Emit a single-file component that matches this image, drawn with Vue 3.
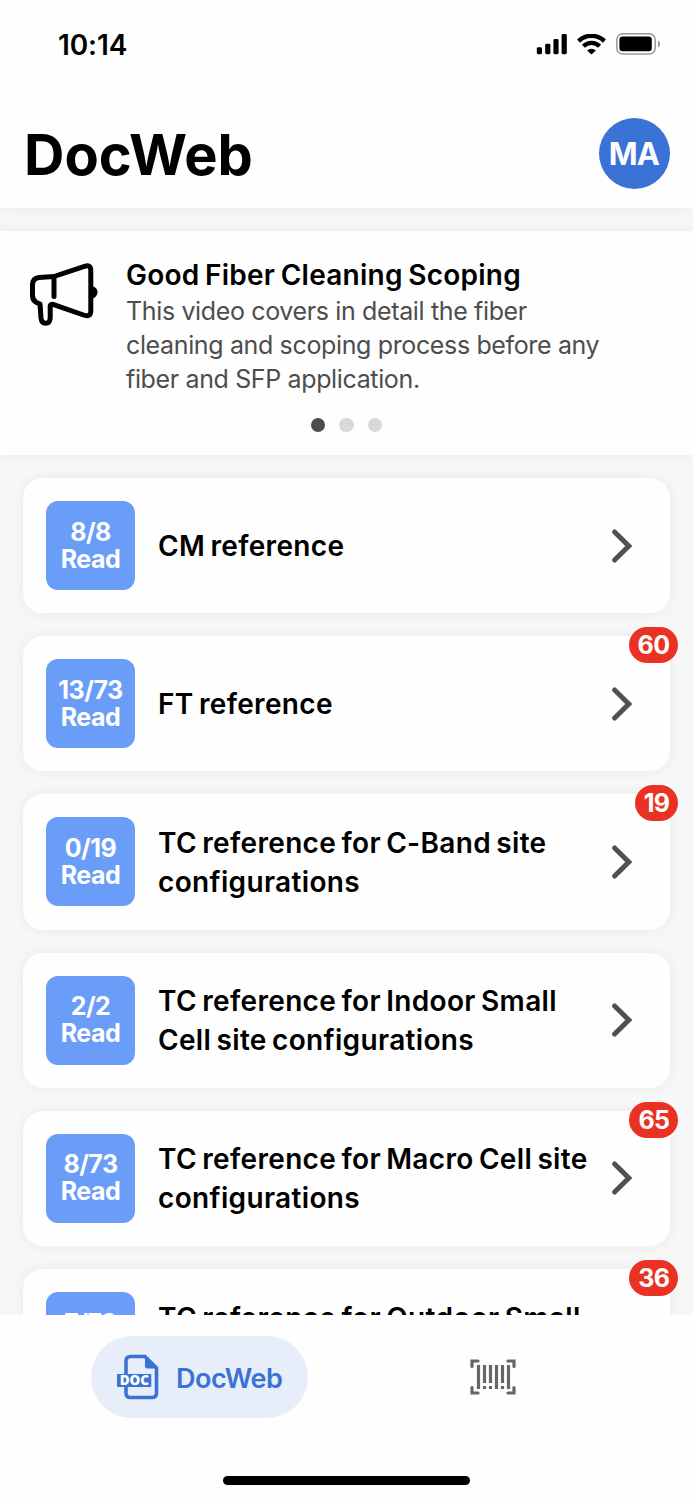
<template>
  <div class="app">
    <header class="header">
      <div class="status-bar">
        <span class="time">10:14</span>
        <div class="status-icons">
          <svg width="31" height="21" viewBox="0 0 31 21">
            <rect x="0.8" y="13.2" width="5.2" height="7" rx="1.4" />
            <rect x="9.2" y="9.8" width="5.2" height="10.4" rx="1.4" />
            <rect x="17.4" y="5" width="5.2" height="15.2" rx="1.4" />
            <rect x="25.6" y="0" width="5.2" height="20.2" rx="1.4" />
          </svg>
          <svg width="29" height="21" viewBox="0 0 29 21">
            <path d="M1.6 7.1A18.4 18.4 0 0 1 27.4 7.1" fill="none" stroke="#000" stroke-width="4.4" />
            <path d="M6.4 12.2A11.6 11.6 0 0 1 22.6 12.2" fill="none" stroke="#000" stroke-width="4.2" />
            <path d="M14.5 20.6L10.1 16.6A6.4 6.4 0 0 1 18.9 16.6Z" />
          </svg>
          <svg width="45" height="22" viewBox="0 0 45 22">
            <rect x="0.8" y="0.8" width="38.4" height="20.2" rx="6" fill="none" stroke="#999" stroke-width="1.5" />
            <rect x="3.4" y="3.6" width="32.4" height="14.6" rx="3.2" />
            <path d="M42 7.6C44.8 8.8 44.8 13.2 42 14.4Z" fill="#999" />
          </svg>
        </div>
      </div>
      <div class="title-row">
        <h1 class="title">DocWeb</h1>
        <div class="avatar">MA</div>
      </div>
    </header>

    <section class="banner">
      <div class="banner-body">
        <svg class="megaphone" width="70" height="64" viewBox="0 0 70 64">
          <g fill="none" stroke="#000" stroke-width="5" stroke-linecap="round" stroke-linejoin="round">
            <path d="M25 13.5L10 14.4Q3.5 15 3.5 22V32.5Q3.5 37.5 7.5 39.5L11 41L12 55Q12.6 60.3 16.5 60.3Q21 60.3 21.2 55V43Q21.2 41 24 41.4L54.5 52Q61.8 54.5 61.8 48V7.5Q61.8 1.3 55.5 3.3L25 13.5V33.5" />
          </g>
          <path d="M63 23Q68.5 24.5 68.5 29.3Q68.5 34 63 35.8Z" />
        </svg>
        <div class="banner-content">
          <h2 class="banner-title">Good Fiber Cleaning Scoping</h2>
          <p class="banner-text">
            <span v-for="line in bannerLines" :key="line">{{ line }}</span>
          </p>
        </div>
      </div>
      <div class="dots">
        <i v-for="n in 3" :key="n" class="dot" :class="{ active: n === 1 }"></i>
      </div>
    </section>

    <main class="list">
      <article v-for="item in items" :key="item.read" class="card">
        <div class="progress">
          <span>{{ item.read }}</span>
          <span>Read</span>
        </div>
        <div class="name">
          <span v-for="line in item.lines" :key="line">{{ line }}</span>
        </div>
        <svg class="chevron" width="22" height="36" viewBox="0 0 22 36">
          <path d="M3.6 4L17.8 18L3.6 32" fill="none" stroke="#505050" stroke-width="5" stroke-linecap="round" />
        </svg>
        <span v-if="item.unread" class="badge">{{ item.unread }}</span>
      </article>
    </main>

    <nav class="tab-bar">
      <div class="tabs">
        <button class="tab active">
          <svg width="42" height="46" viewBox="0 0 42 46">
            <path d="M9 20V7Q9 2.5 13.5 2.5H28L39.5 14V39Q39.5 43.5 35 43.5H13.5Q9 43.5 9 39V32" fill="none" stroke="#3b72d6" stroke-width="3.6" />
            <path d="M28 1.5L41 14.5H30Q28 14.5 28 12.5Z" fill="#3b72d6" />
            <rect x="0" y="20" width="34.3" height="13" rx="1" fill="#3b72d6" />
            <text x="17.4" y="31.3" class="doc-label">DOC</text>
          </svg>
          <span>DocWeb</span>
        </button>
        <button class="tab scan">
          <svg width="46" height="36" viewBox="0 0 46 36">
            <g fill="none" stroke="#666" stroke-width="3.2">
              <path d="M2 7.5V2H8M38 2H44V7.5M2 28.5V34H8M38 34H44V28.5" stroke-linecap="round" />
              <path d="M8.5 6V30M26.5 6V30M38.5 6V30M14.5 6V24M20.5 6V24M32.5 6V24M14.5 27V30M20.5 27V30M32.5 27V30" />
            </g>
          </svg>
        </button>
      </div>
      <div class="home-indicator"></div>
    </nav>
  </div>
</template>

<script setup>
const bannerLines = [
  'This video covers in detail the fiber',
  'cleaning and scoping process before any',
  'fiber and SFP application.'
]

const items = [
  { read: '8/8', lines: ['CM reference'] },
  { read: '13/73', lines: ['FT reference'], unread: 60 },
  { read: '0/19', lines: ['TC reference for C-Band site', 'configurations'], unread: 19 },
  { read: '2/2', lines: ['TC reference for Indoor Small', 'Cell site configurations'] },
  { read: '8/73', lines: ['TC reference for Macro Cell site', 'configurations'], unread: 65 },
  { read: '7/73', lines: ['TC reference for Outdoor Small', 'Cell site configurations'], unread: 36 }
]
</script>

<style>
body {
  margin: 0;
  background: #f7f7f7;
}
</style>

<style scoped>
.app {
  width: 693px;
  height: 1500px;
  display: flex;
  flex-direction: column;
  overflow: hidden;
  background: #f7f7f7;
  color: #000;
  font-family: Inter, "Liberation Sans", sans-serif;
}

.header {
  height: 208px;
  flex-shrink: 0;
  background: #fefefe;
  box-shadow: 0 0 14px rgba(0, 0, 0, 0.06);
}

.status-bar {
  height: 88px;
  padding: 0 32px 0 58px;
  display: flex;
  align-items: center;
  justify-content: space-between;
}

.time {
  margin-top: 1px;
  font-size: 28px;
  font-weight: 600;
  letter-spacing: -0.1px;
}

.status-icons {
  display: flex;
  align-items: center;
  gap: 10px;
}

.title-row {
  height: 130px;
  padding: 0 23px 0 24px;
  display: flex;
  align-items: center;
  justify-content: space-between;
}

.title {
  margin: 3px 0 0;
  font-size: 56px;
  line-height: 64px;
  font-weight: 700;
}

.avatar {
  width: 71px;
  height: 71px;
  border-radius: 50%;
  background: #3b72d6;
  color: #fefefe;
  font-size: 31px;
  font-weight: 700;
  letter-spacing: -0.8px;
  text-indent: -1px;
  display: flex;
  align-items: center;
  justify-content: center;
}

.banner {
  height: 224px;
  margin-top: 23px;
  flex-shrink: 0;
  background: #fefefe;
  box-shadow: 0 0 14px rgba(0, 0, 0, 0.06);
}

.banner-body {
  display: flex;
  padding: 24px 29px 0;
}

.megaphone {
  margin-top: 7.5px;
}

.banner-content {
  margin-left: 27px;
}

.banner-title {
  margin: 0;
  font-size: 28px;
  line-height: 40px;
  font-weight: 600;
  letter-spacing: 0.25px;
  word-spacing: -1.8px;
  white-space: nowrap;
}

.banner-text {
  margin: 0;
  color: #4d4d4d;
  font-size: 25px;
  line-height: 33.8px;
  letter-spacing: -0.36px;
}

.banner-text span {
  display: block;
  white-space: nowrap;
}

.dots {
  margin-top: 21.5px;
  display: flex;
  justify-content: center;
  gap: 14px;
}

.dot {
  width: 14.5px;
  height: 14.5px;
  border-radius: 50%;
  background: #d9d9d9;
}

.dot.active {
  background: #4d4d4d;
}

.list {
  flex: 1;
  min-height: 0;
  padding: 23px 23px 0;
  display: flex;
  flex-direction: column;
  gap: 23px;
}

.card {
  position: relative;
  height: 135.2px;
  flex-shrink: 0;
  box-sizing: border-box;
  padding: 0 37px 0 23px;
  display: flex;
  align-items: center;
  border-radius: 20px;
  background: #fefefe;
  box-shadow: 0 0 14px rgba(0, 0, 0, 0.06);
}

.progress {
  width: 89px;
  height: 89px;
  flex-shrink: 0;
  border-radius: 12px;
  background: #6a9df8;
  color: #fefefe;
  font-size: 25px;
  line-height: 27px;
  font-weight: 700;
  letter-spacing: -0.5px;
  display: flex;
  flex-direction: column;
  align-items: center;
  justify-content: center;
}

.name {
  flex: 1;
  margin: 2px 0 0 23px;
  font-size: 28px;
  line-height: 39px;
  font-weight: 600;
  letter-spacing: 0.34px;
  word-spacing: -2.1px;
}

.name span {
  display: block;
  white-space: nowrap;
}

.badge {
  position: absolute;
  top: -9px;
  right: -8px;
  height: 36px;
  padding: 0 8.5px 0 9px;
  border-radius: 18px;
  background: #e93223;
  color: #fefefe;
  font-size: 25px;
  line-height: 36px;
  font-weight: 700;
  letter-spacing: -0.6px;
}

.tab-bar {
  position: relative;
  height: 185px;
  flex-shrink: 0;
  background: #fefefe;
}

.tabs {
  display: flex;
  align-items: center;
  padding: 21px 0 0 91px;
}

.tab {
  border: 0;
  padding: 0;
  background: none;
  font: inherit;
  display: flex;
  align-items: center;
}

.tab.active {
  width: 217px;
  height: 82px;
  padding-left: 26px;
  gap: 17px;
  border-radius: 41px;
  background: #e7eef9;
  color: #3b72d6;
  font-size: 27px;
  font-weight: 600;
  letter-spacing: -0.5px;
}

.tab.active span {
  margin-top: 2px;
}

.tab.scan {
  margin-left: 162px;
}

.doc-label {
  fill: #fefefe;
  font-size: 13.5px;
  font-weight: 800;
  font-family: "Open Sans", sans-serif;
  letter-spacing: 0;
  text-anchor: middle;
}

.home-indicator {
  width: 247px;
  height: 9px;
  margin: 58px auto 0;
  border-radius: 5px;
  background: #000;
}
</style>
